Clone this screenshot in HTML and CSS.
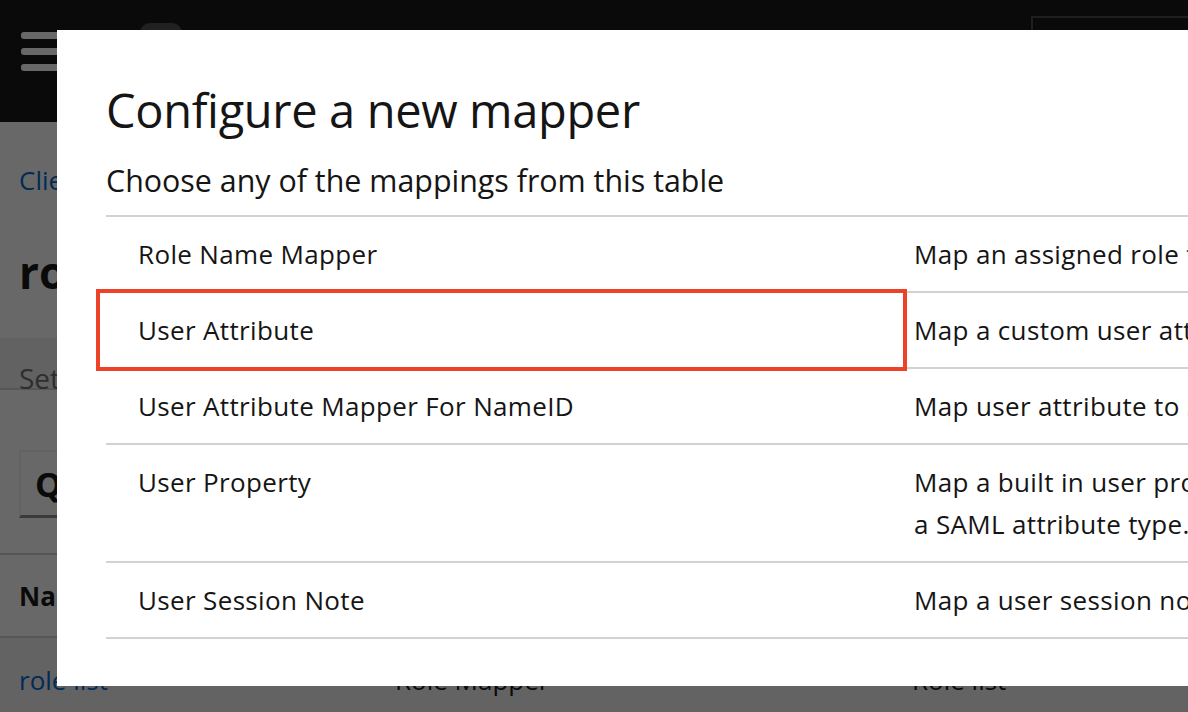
FILE: index.html
```html
<!DOCTYPE html>
<html lang="en">
<head>
<meta charset="utf-8">
<title>Configure a new mapper</title>
<link rel="stylesheet" href="styles.css">
</head>
<body>
<div class="page">
  <header class="masthead">
    <div class="hamburger"><span></span><span></span><span></span></div>
    <div class="logo"></div>
    <div class="spacer"></div>
    <div class="tools-box"></div>
  </header>
  <main class="main">
    <div class="breadcrumb">Client details</div>
    <h1 class="page-title">role-list</h1>
    <div class="tabs"><span class="tab">Settings</span></div>
    <div class="toolbar">
      <div class="search"><span class="search-q">Q</span><span class="search-text">Search by name</span></div>
    </div>
    <div class="bg-table">
      <div class="bg-head"><span class="bg-c1">Name</span><span class="bg-c2">Category</span><span class="bg-c3">Type</span></div>
      <div class="bg-row"><span class="bg-c1 bg-link">role list</span><span class="bg-c2">Role Mapper</span><span class="bg-c3">Role list</span></div>
    </div>
  </main>
</div>

<div class="backdrop">
  <div class="modal">
    <h2 class="modal-title">Configure a new mapper</h2>
    <p class="modal-desc">Choose any of the mappings from this table</p>
    <div class="mapper-table">
      <div class="mapper-row">
        <div class="cell-name">Role Name Mapper</div>
        <div class="cell-help">Map an assigned role to a new name</div>
      </div>
      <div class="mapper-row">
        <div class="cell-name">User Attribute</div>
        <div class="cell-help">Map a custom user attribute to a to a SAML attribute.</div>
        <div class="highlight"></div>
      </div>
      <div class="mapper-row">
        <div class="cell-name">User Attribute Mapper For NameID</div>
        <div class="cell-help">Map user attribute to SAML NameID value.</div>
      </div>
      <div class="mapper-row">
        <div class="cell-name">User Property</div>
        <div class="cell-help">Map a built in user property (email, firstName, lastName) to<br>a SAML attribute type.</div>
      </div>
      <div class="mapper-row">
        <div class="cell-name">User Session Note</div>
        <div class="cell-help">Map a user session note to a SAML attribute.</div>
      </div>
    </div>
  </div>
</div>
</body>
</html>
```
FILE: styles.css
```css
* { box-sizing: border-box; }

html, body {
  margin: 0;
  padding: 0;
  width: 1188px;
  height: 712px;
  overflow: hidden;
  background: #ffffff;
  font-family: "Open Sans", "Noto Sans", sans-serif;
  color: #151515;
}

/* ---------- background page ---------- */
.page {
  display: flex;
  flex-direction: column;
  height: 712px;
}

.masthead {
  height: 122px;
  background: #151515;
  display: flex;
  align-items: flex-start;
  padding: 0 0 0 21px;
  flex-shrink: 0;
}

.hamburger {
  margin-top: 32px;
  display: flex;
  flex-direction: column;
  gap: 9px;
}
.hamburger span {
  display: block;
  width: 40px;
  height: 7px;
  border-radius: 3px;
  background: #ffffff;
}

.logo {
  margin: 23px 0 0 79px;
  width: 42px;
  height: 44px;
  border-radius: 10px;
  background: #4e4e4e;
}

.spacer { flex: 1; }

.tools-box {
  margin-top: 16px;
  width: 157px;
  height: 60px;
  border: 2px solid #4a4a4a;
  border-right: none;
}

.main {
  flex: 1;
  background: #ffffff;
  padding-left: 19px;
}

.breadcrumb {
  margin-top: 40px;
  font-size: 26px;
  line-height: 36px;
  color: #0066cc;
}

.page-title {
  margin: 46px 0 0 0;
  font-size: 44px;
  line-height: 56px;
  font-weight: 700;
}

.tabs {
  margin: 38px 0 0 -19px;
  height: 52px;
  background: #f0f0f0;
  border-bottom: 2px solid #d2d2d2;
  padding: 22px 0 0 19px;
}
.tab {
  font-size: 28px;
  line-height: 36px;
  color: #6a6e73;
}

.toolbar {
  height: 165px;
  padding-top: 60px;
  border-bottom: 2px solid #d2d2d2;
  margin-left: -19px;
  padding-left: 19px;
}
.search {
  width: 360px;
  height: 68px;
  border: 2px solid #f0f0f0;
  border-bottom: 3px solid #8a8d90;
  display: flex;
  align-items: center;
  padding-left: 14px;
  gap: 14px;
}
.search-q {
  font-size: 34px;
  font-weight: 700;
}
.search-text {
  font-size: 26px;
  color: #6a6e73;
}

.bg-table { margin-left: -19px; }
.bg-head, .bg-row {
  display: flex;
  padding-left: 19px;
  font-size: 26px;
}
.bg-head {
  height: 83px;
  align-items: center;
  font-weight: 700;
  border-bottom: 2px solid #d2d2d2;
}
.bg-row {
  height: 84px;
  align-items: center;
  background: #f2f2f2;
}
.bg-c1 { width: 376px; }
.bg-c2 { width: 517px; }
.bg-c3 { flex: 1; }
.bg-link { color: #0066cc; }

/* ---------- modal ---------- */
.backdrop {
  position: fixed;
  inset: 0;
  background: rgba(3, 3, 3, 0.6);
  padding: 30px 0 0 57px;
  overflow: hidden;
}

.modal {
  width: 1500px;
  background: #ffffff;
  padding: 48px 0 47px 49px;
}

.modal-title {
  margin: 0;
  font-size: 47px;
  line-height: 64px;
  font-weight: 500;
  color: #151515;
  letter-spacing: -0.35px;
}

.modal-desc {
  margin: 19px 0 14px 0;
  font-size: 30.4px;
  line-height: 40px;
  color: #151515;
}

.mapper-table {
  border-top: 2px solid #d2d2d2;
}

.mapper-row {
  position: relative;
  display: flex;
  border-bottom: 2px solid #d2d2d2;
  padding: 16px 0;
  font-size: 26px;
  line-height: 42px;
  letter-spacing: 0.35px;
}

.cell-name {
  width: 800px;
  flex-shrink: 0;
  padding-left: 32px;
}

.cell-help {
  padding-left: 8px;
  white-space: nowrap;
}

.highlight {
  position: absolute;
  left: -10px;
  top: -4px;
  width: 811px;
  height: 82px;
  border: 4px solid #ec4328;
}
```
